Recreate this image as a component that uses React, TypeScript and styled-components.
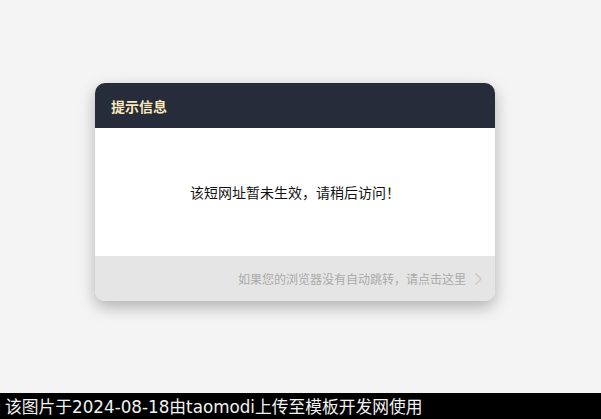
import styled, { createGlobalStyle } from 'styled-components'

const GlobalStyle = createGlobalStyle`
  html, body {
    margin: 0;
    padding: 0;
    background: #f4f4f4;
    font-family: "Noto Sans CJK SC", "Noto Sans", sans-serif;
  }
`

const Page = styled.div`
  position: relative;
  height: 419px;
  overflow: hidden;
`

const Stage = styled.div`
  padding-top: 83px;
  padding-left: 95px;
`

const Card = styled.div`
  width: 400px;
  border-radius: 10px;
  overflow: hidden;
  background: #fff;
  box-shadow: 0 6px 16px rgba(0, 0, 0, 0.28);
`

const Header = styled.div`
  height: 45px;
  display: flex;
  align-items: center;
  padding: 0 16px;
  background: #262c39;
  color: #fbe8bf;
  font-size: 14px;
  font-weight: bold;
`

const Body = styled.div`
  height: 128px;
  display: flex;
  align-items: center;
  justify-content: center;
  color: #111;
  font-size: 14px;
`

const Footer = styled.div`
  height: 45px;
  display: flex;
  align-items: center;
  justify-content: flex-end;
  gap: 8px;
  padding: 0 12px;
  background: #e5e5e5;
  color: #aaaaaa;
  font-size: 12px;
`

const Watermark = styled.div`
  position: absolute;
  left: 0;
  right: 0;
  bottom: 0;
  height: 26px;
  display: flex;
  align-items: center;
  padding-left: 5px;
  background: #000;
  color: #f2f2f2;
  font-family: "DejaVu Sans", "Noto Sans CJK SC", sans-serif;
  font-size: 16.75px;
`

const Chevron = () => (
  <svg width="9" height="14" viewBox="0 0 9 14" fill="none">
    <path d="M1.5 1.5 L7 7 L1.5 12.5" stroke="#c8c8c8" strokeWidth="1.4" />
  </svg>
)

export default function App() {
  return (
    <Page>
      <GlobalStyle />
      <Stage>
        <Card>
          <Header>提示信息</Header>
          <Body>该短网址暂未生效，请稍后访问！</Body>
          <Footer>
            <span>如果您的浏览器没有自动跳转，请点击这里</span>
            <Chevron />
          </Footer>
        </Card>
      </Stage>
      <Watermark>该图片于2024-08-18由taomodi上传至模板开发网使用</Watermark>
    </Page>
  )
}
